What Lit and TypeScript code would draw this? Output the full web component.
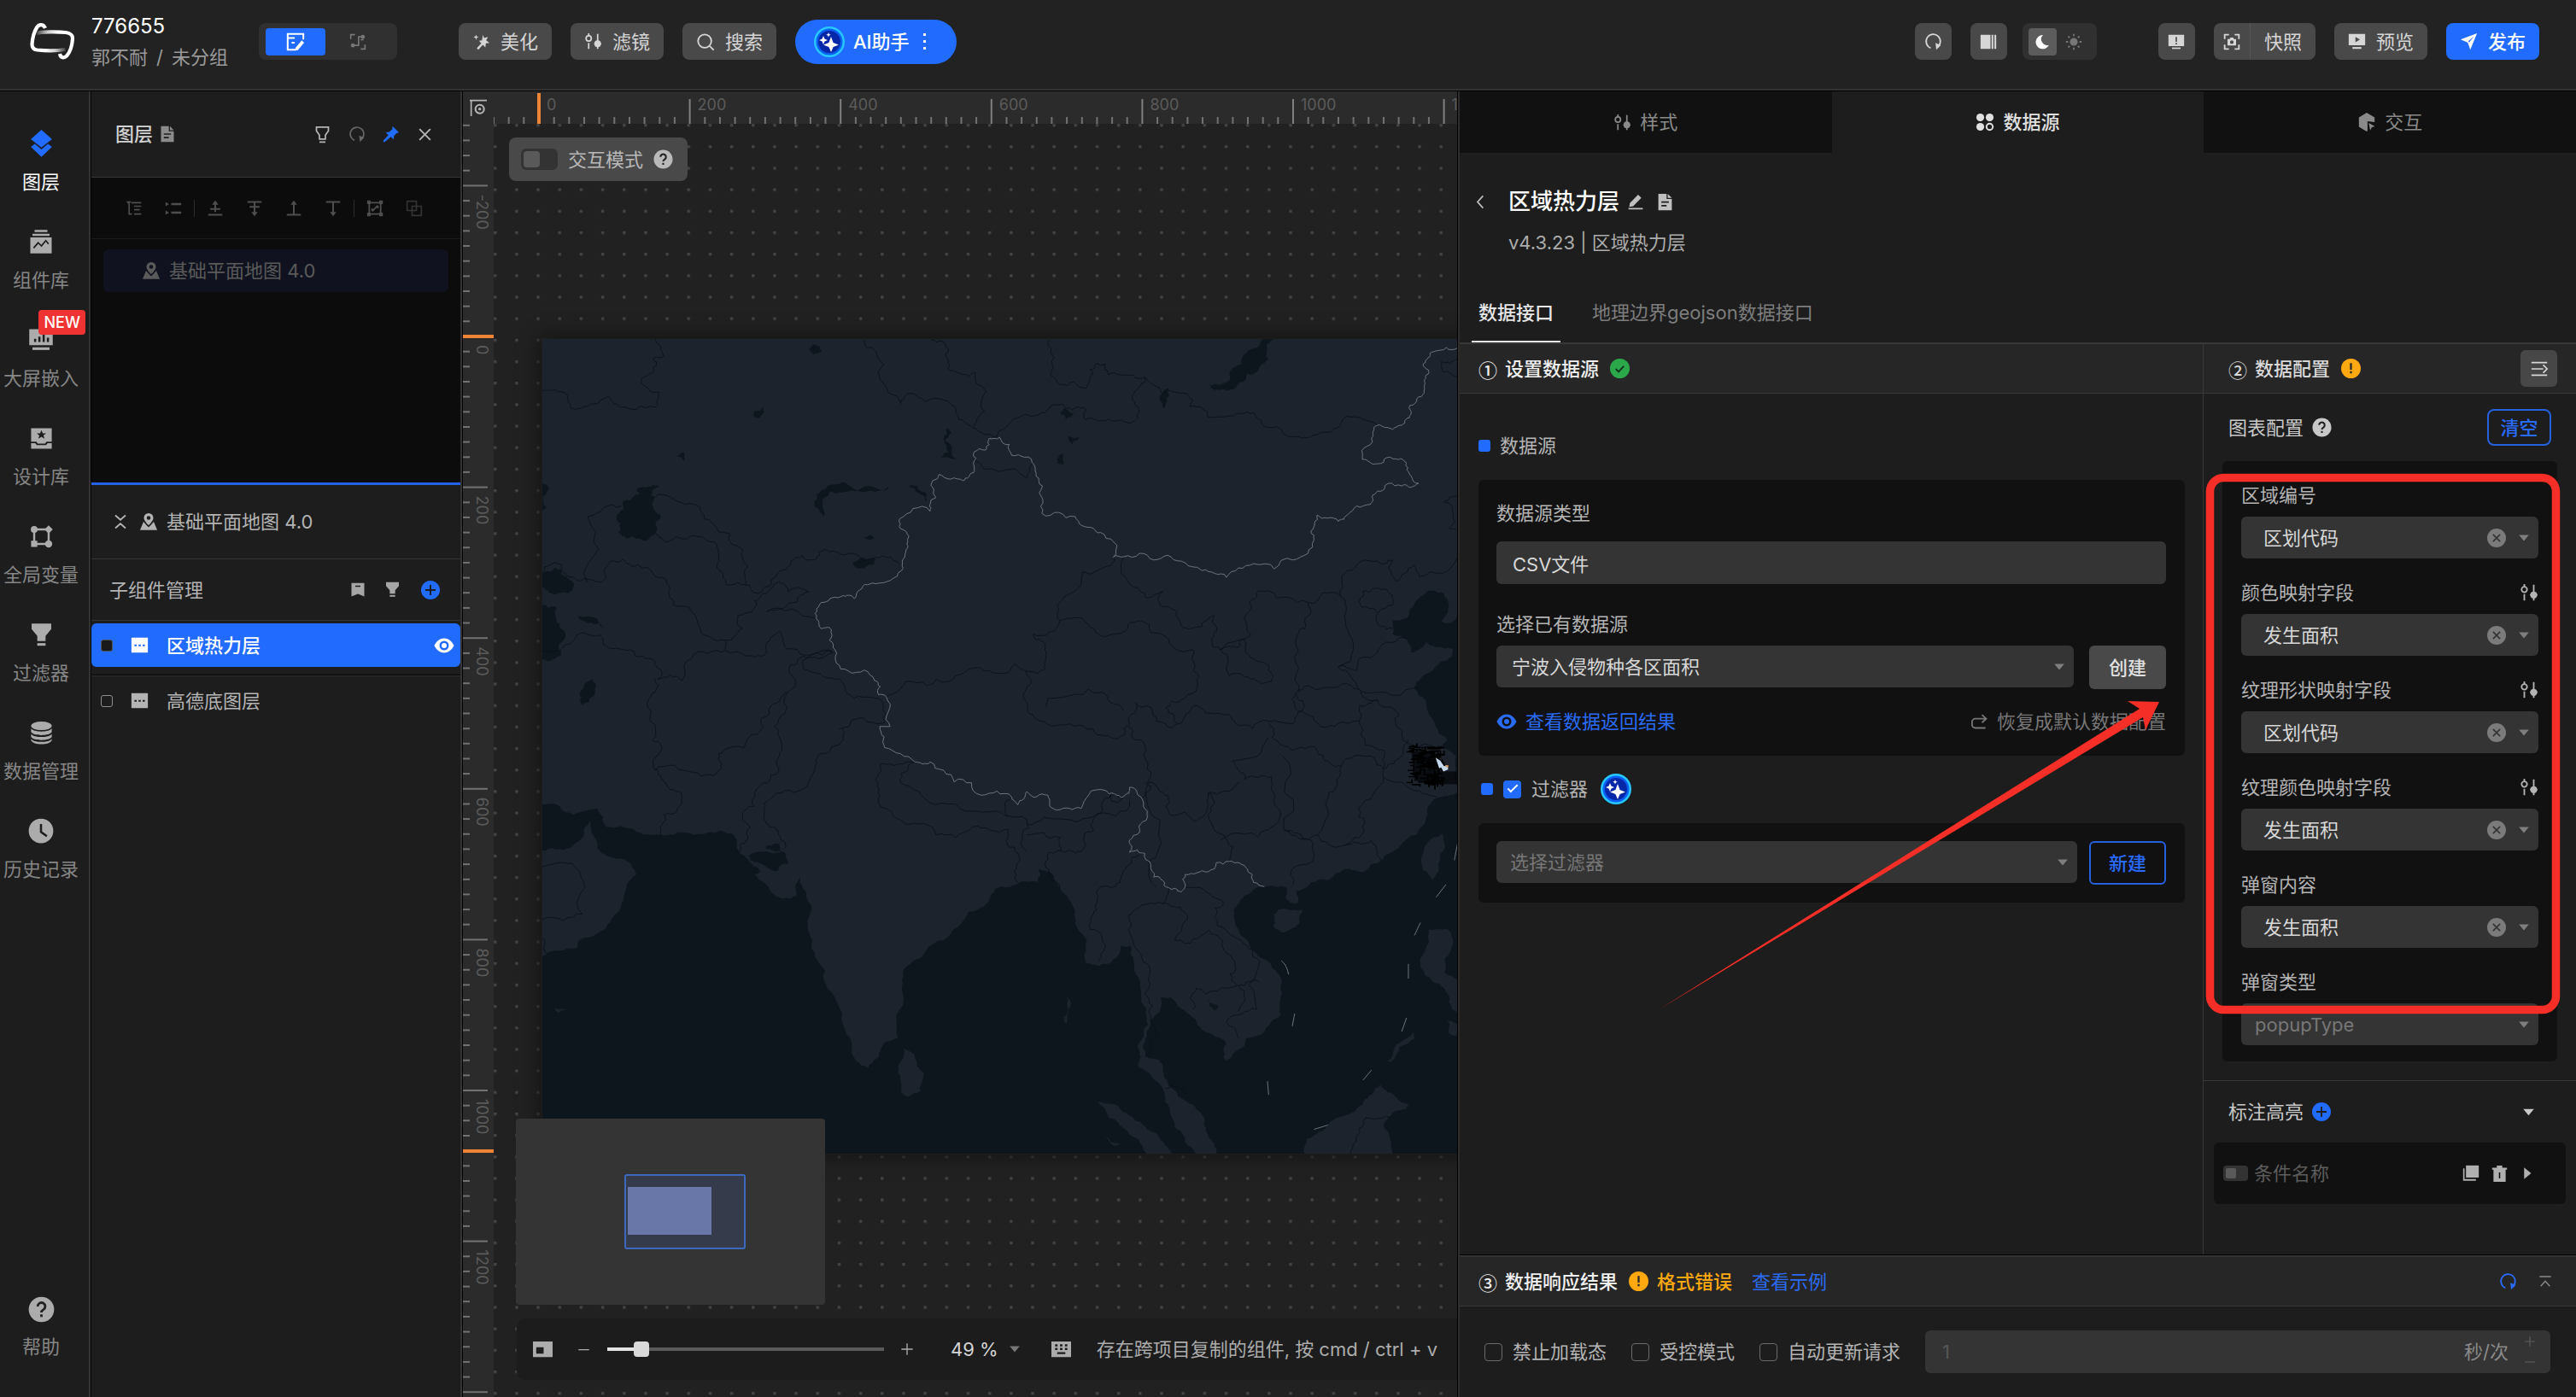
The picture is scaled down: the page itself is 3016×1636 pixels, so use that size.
import { LitElement, html, css, svg, nothing, type TemplateResult } from "lit";
import { customElement, property } from "lit/decorators.js";
import { classMap } from "lit/directives/class-map.js";

/* ---------- icons: each is drawn on a 24 x 24 grid ---------- */
const ICONS: Record<string, TemplateResult> = {
  layers: svg`<path d="M12 0 21 8 12 15 3 8Z"/><path d="M3 14.500 6.500 12 12 16.800 17.500 12 21 14.500 12 23Z"/>`,
  library: svg`<path d="M6 1h12v2H6zM4 4.500h16v2H4z"/><path fill-rule="evenodd" d="M2 8h20v15H2zM5.500 18.500l4-4.500 3 3 4-5 2 2.500 1-1-3-3.500-4.200 5-3-3-4.600 5.200z"/>`,
  embed: svg`<path fill-rule="evenodd" d="M1 2h22v15H1zM5.500 11v3h2v-3zM9.500 9v5h2V9zM13.500 7v7h2V7zM17.500 10v4h2v-4z"/><path d="M4 19h16v2.500H4z"/>`,
  design: svg`<path fill-rule="evenodd" d="M2 2h20v13h-5l-1.500 2h-7L7 15H2zM12 4l-1.300 3H7.500l2.500 2-1 3.200 3-1.900 3 1.900-1-3.200 2.500-2h-3.200z"/><path d="M2 16.500h4l1.500 2h9l1.500-2h4V22H2z"/>`,
  vars: svg`<path d="M5 5h14v14H5z" fill="none" stroke="currentColor" stroke-width="2"/><circle cx="5" cy="5" r="3.300"/><path d="m19 1 4 4-4 4-4-4zM2 16h6v6H2z"/><circle cx="19" cy="19" r="3.500"/>`,
  funnel: svg`<path d="M2.500 1h19v5.500L16 13v5H8v-5L2.500 6.500z"/><path d="M8 20h8v2.500H8z"/>`,
  funnelLine: svg`<path d="M4 2h16v5l-4 6v5H8v-5L4 7zM8 22h8" fill="none" stroke="currentColor" stroke-width="2"/>`,
  db: svg`<ellipse cx="12" cy="5" rx="10" ry="4.200"/><path d="M2 7.500c2 4 18 4 20 0V11c-2 4-18 4-20 0zM2 12.800c2 4 18 4 20 0v3c-2 4-18 4-20 0zM2 17.500c2 4 18 4 20 0V19c-2 5-18 5-20 0z"/>`,
  clock: svg`<circle cx="12" cy="12" r="11.500"/><path d="M12 5.500V13l5.500 4" fill="none" stroke="#1d1d1d" stroke-width="2"/>`,
  help: svg`<circle cx="12" cy="12" r="11.500"/><path d="M8.600 9.200a3.400 3.400 0 1 1 5.200 2.900c-1.200.7-1.800 1.200-1.800 2.600M12 16.500v2.200" fill="none" stroke="#222" stroke-width="2.200"/>`,
  doc: svg`<path fill-rule="evenodd" d="M3 1h11v7h7v15H3zM7 11v2h10v-2zM7 16v2h7v-2z"/><path d="m15.500 1 5.500 5.500h-5.500z"/>`,
  refresh: svg`<path d="M8.500 20.800A9.500 9.500 0 1 1 17 20" fill="none" stroke="currentColor" stroke-width="2"/><path d="m15 14 7 3-6 6z"/>`,
  pin: svg`<path d="m14 1 9 9-3 .5-4 4-.5 5-4-3.500L3 23l-2 0 0-2 7-7.500L4.500 9.500l5-.5 4-4z"/>`,
  close: svg`<path d="m4 4 16 16M20 4 4 20" fill="none" stroke="currentColor" stroke-width="2.400"/>`,
  tree: svg`<path d="M8 4h14M12 9h10M12 14h8M12 20h10M5 6v14h4" fill="none" stroke="currentColor" stroke-width="2"/><path d="M1 2h7L4.500 7z"/>`,
  list: svg`<path d="M9 6h14M9 18h14" fill="none" stroke="currentColor" stroke-width="3"/><path d="m1 3 5 3-5 3zM1 15l5 3-5 3z"/>`,
  up1: svg`<path d="M2 21h20M5 13h14M12 17V4" fill="none" stroke="currentColor" stroke-width="2.400"/><path d="m7.500 7 4.500-6 4.500 6z"/>`,
  down1: svg`<path d="M2 3h20M5 10h14M12 3v16" fill="none" stroke="currentColor" stroke-width="2.400"/><path d="m7.500 17 4.500 6 4.500-6z"/>`,
  top: svg`<path d="M2 21h20M12 21V4" fill="none" stroke="currentColor" stroke-width="2.400"/><path d="m7.500 7 4.500-6 4.500 6z"/>`,
  bottom: svg`<path d="M2 3h20M12 3v16" fill="none" stroke="currentColor" stroke-width="2.400"/><path d="m7.500 17 4.500 6 4.500-6z"/>`,
  group: svg`<path d="M4 4h16v16H4zM8 16l8-8M8 16v-4M16 8v4" fill="none" stroke="currentColor" stroke-width="2.200"/><path d="M1 1h5v5H1zM18 1h5v5h-5zM1 18h5v5H1zM18 18h5v5h-5z"/>`,
  ungroup: svg`<path d="M2 2h13v13H2zM9 9h13v13H9z" fill="none" stroke="currentColor" stroke-width="2" opacity="0.6"/>`,
  map: svg`<path fill-rule="evenodd" d="M12 1a6 6 0 0 1 6 6c0 4-6 9.500-6 9.500S6 11 6 7a6 6 0 0 1 6-6zm0 3.500a2.500 2.500 0 1 0 0 5 2.500 2.500 0 0 0 0-5z"/><path d="M5.500 12 9 16l3 3 3-3 3.500-4L23 22.500H1z"/>`,
  collapse: svg`<path d="m4 2 8 7 8-7M4 22l8-7 8 7" fill="none" stroke="currentColor" stroke-width="2.400"/>`,
  bookmark: svg`<path fill-rule="evenodd" d="M2 1h20v21l-10-4-10 4zM8 5v2h8V5z"/>`,
  plus: svg`<circle cx="12" cy="12" r="12"/><path d="M12 5.500v13M5.500 12h13" stroke="#1d1d1d" stroke-width="2" fill="none"/>`,
  sub: svg`<path fill-rule="evenodd" d="M1 2h22v20H1zM5 11v2.500h3V11zM10.500 11v2.500h3V11zM16 11v2.500h3V11z"/>`,
  eye: svg`<path fill-rule="evenodd" d="M12 3.500c6 0 10 5 11.500 8.500C22 15.500 18 20.500 12 20.500S2 15.500.5 12C2 8.500 6 3.500 12 3.500zm0 3a5.500 5.500 0 1 0 0 11 5.500 5.500 0 0 0 0-11z"/><circle cx="12" cy="12" r="3"/>`,
  edit: svg`<path d="M12 22H2V2h20v7M2 7h9M7 13h4" fill="none" stroke="currentColor" stroke-width="2.200"/><path d="m20 10 3 3-8 9.500-3.500.5.500-3.500z"/>`,
  flow: svg`<path d="M2 8V2h6M16 22h6v-6M18 5h-5v12H7" fill="none" stroke="currentColor" stroke-width="2"/><circle cx="19" cy="5" r="2.800"/><circle cx="5" cy="17" r="2.800"/><path d="M16 9h4" stroke="currentColor" stroke-width="2"/>`,
  magic: svg`<path d="m14 3 1.800 4.500L21 6l-2.500 4.500L23 14l-5 .5L17.500 20 14 16.500 8 23l-2-2 6-6.500L9 11l4-.5z"/><path d="m5 3 1 2.500L8.500 6 6 7 5 10 4 7 1.500 6 4 5.500z"/>`,
  filter: svg`<circle cx="6" cy="8" r="3.500" fill="none" stroke="currentColor" stroke-width="2"/><path d="M6 1v3.500M6 14v8M18 2v20" fill="none" stroke="currentColor" stroke-width="2"/><path d="m18 10 5 5-5 5-5-5z"/><circle cx="18" cy="15" r="4.500"/>`,
  search: svg`<circle cx="11" cy="11" r="8.500" fill="none" stroke="currentColor" stroke-width="2"/><path d="m17.500 17.500 5 5" stroke="currentColor" stroke-width="2"/>`,
  columns: svg`<path d="M1 2h14v20H1zM16.500 2H19v20h-2.500zM20.500 2H23v20h-2.500z"/>`,
  moon: svg`<path d="M13 1.500A10.800 10.800 0 1 0 22.500 17 9.500 9.500 0 0 1 13 1.500z"/>`,
  sun: svg`<circle cx="12" cy="12" r="5.500"/><path d="M12 1v3M12 20v3M1 12h3M20 12h3M4.200 4.200l2 2M17.800 17.800l2 2M4.200 19.800l2-2M17.800 6.200l2-2" stroke="currentColor" stroke-width="2.200"/>`,
  alert: svg`<path fill-rule="evenodd" d="M1 2h22v16H1zM11 5v7h2V5zM11 13.500v2h2v-2z"/><path d="M6 20h12v2H6z"/>`,
  shot: svg`<path d="M2 8V2h6M16 2h6v6M22 16v6h-6M8 22H2v-6" fill="none" stroke="currentColor" stroke-width="2.200"/><path fill-rule="evenodd" d="M6 8h3l1-2h4l1 2h3v9H6zm6 2a2.500 2.500 0 1 0 0 5 2.500 2.500 0 0 0 0-5z"/>`,
  preview: svg`<path fill-rule="evenodd" d="M1 2h22v15H1zM10 6v7l6-3.500z"/><path d="M6 19.500h12V22H6z"/>`,
  send: svg`<path fill-rule="evenodd" d="M23 1 14 23l-3.500-9.500L1 9.500zM19 5l-8 7 1.500 1z"/>`,
  data: svg`<circle cx="6" cy="6" r="5"/><circle cx="18" cy="6" r="5"/><circle cx="6" cy="18" r="5"/><circle cx="18" cy="18" r="4" fill="none" stroke="currentColor" stroke-width="2.200"/>`,
  cube: svg`<path d="M12 0 22 6v6l-9-1v12l-1 1L2 18V6z"/><path d="m14.500 13 8 4.500-4 1-2 4z"/>`,
  back: svg`<path d="M16 2 7 12l9 10" fill="none" stroke="currentColor" stroke-width="2.400"/>`,
  pencil: svg`<path d="M4 14 15.500 2.500l4.500 4.500L8.500 18.500 3 19.500zM2 21h20v2H2z"/>`,
  check: svg`<circle cx="12" cy="12" r="12" fill="#2ba84a"/><path d="m7 12.500 3.500 3.500L17 9" fill="none" stroke="#16321d" stroke-width="2"/>`,
  warn: svg`<circle cx="12" cy="12" r="12" fill="#ffa80f"/><path d="M12 5.500v8M12 15.500v2.500" stroke="#2a2a2a" stroke-width="2.400"/>`,
  indent: svg`<path d="M2 4h20M2 12h15M2 20h20M17 7l5 5-5 5" fill="none" stroke="currentColor" stroke-width="1.800"/>`,
  caret: svg`<path d="M2 6h20l-10 12z"/>`,
  caretRight: svg`<path d="M7 3v18l11-9z"/>`,
  clear: svg`<circle cx="12" cy="12" r="12"/><path d="m7.500 7.500 9 9M16.500 7.500l-9 9" stroke="#333" stroke-width="1.800"/>`,
  restore: svg`<path d="M20 21H6a5 5 0 0 1-5-5v-3a5 5 0 0 1 5-5h14M15 2.500 21 8l-6 5.500" fill="none" stroke="currentColor" stroke-width="2.200"/>`,
  copy: svg`<path d="M5 1h18v17H5z"/><path d="M1 5h2v15h16v2.500H1z"/>`,
  trash: svg`<path fill-rule="evenodd" d="M8 0h8v3h7v3h-2v18H3V6H1V3h7zM11 10v9h2v-9z"/>`,
  toTop: svg`<path d="M2 3h20M4 20l8-9 8 9" fill="none" stroke="currentColor" stroke-width="2.200"/>`,
  minimap: svg`<path fill-rule="evenodd" d="M0 2h24v19H0zM4 9v8h9V9z"/>`,
  keyboard: svg`<path fill-rule="evenodd" d="M0 2h24v19H0zM4.500 5.500v2.500h3V5.500zM10.500 5.500v2.500h3V5.500zM16.500 5.500v2.500h3V5.500zM4.500 10v2.500h3V10zM10.500 10v2.500h3V10zM16.500 10v2.500h3V10zM7 15v2.500h10V15z"/>`,
  minus: svg`<path d="M2 11h20v2H2z"/>`,
  add: svg`<path d="M11 2h2v9h9v2h-9v9h-2v-9H2v-2h9z"/>`,
  origin: svg`<path d="M2 24V1M0 2h24" stroke="currentColor" stroke-width="2" fill="none"/><circle cx="14" cy="14" r="6" fill="none" stroke="currentColor" stroke-width="2.500"/><circle cx="14" cy="14" r="2"/>`,
};

const ico = (name: string, size = 20) =>
  html`<svg class="ico" width=${size} height=${size} viewBox="0 0 24 24" fill="currentColor" aria-hidden="true">${ICONS[name]}</svg>`;

const aiBadge = html`<svg class="ico" width="36" height="36" viewBox="0 0 36 36" aria-hidden="true">
  <circle cx="18" cy="18" r="18" fill="#27c8ff" />
  <circle cx="18" cy="18" r="15.500" fill="#0a5ff0" />
  <circle cx="18" cy="18" r="13" fill="#0527a8" />
  <path d="m20 12 2.600 7 6.400 2.500-6.400 2.500L20 30l-2.600-6L11 21.500l6.400-2.500z" fill="#fff" />
  <path d="m11 11 1.500 3.500L16 16l-3.500 1.500L11 21l-1.500-3.500L6 16l3.500-1.500zM17 7l.8 2 2 .8-2 .8-.8 2-.8-2-2-.8 2-.8z" fill="#fff" />
</svg>`;

const base = css`
  *, *::before, *::after { box-sizing: border-box; }
  :host {
    box-sizing: border-box;
    font-family: Inter, "Noto Sans CJK SC", sans-serif;
    font-size: 22px;
    line-height: 30px;
    color: #b4b4b4;
  }
  button, input, select { font: inherit; color: inherit; margin: 0; }
  button { border: 0; padding: 0; background: none; display: inline-flex; align-items: center; justify-content: center; white-space: nowrap; }
  a { color: inherit; text-decoration: none; }
  .ico { display: block; flex: none; }
  .row { display: flex; align-items: center; }
  .grow { flex: 1; }
`;

/* ---------- map geometry ---------- */
type Pt = [number, number];
const parse = (s: string): Pt[] => s.trim().split(/\s+/).map((p) => p.split(",").map(Number) as Pt);

let seed = 7;
const rand = () => {
  seed = (seed * 16807) % 2147483647;
  return seed / 2147483647 - 0.5;
};
/** Midpoint displacement: turns a coarse outline into a ragged one. */
function ragged(s: string, amp = 0.26, closed = false): string {
  let pts = parse(s);
  if (closed) pts.push(pts[0]);
  for (let level = 0; level < 3; level++) {
    const out: Pt[] = [pts[0]];
    for (let i = 1; i < pts.length; i++) {
      const [ax, ay] = pts[i - 1];
      const [bx, by] = pts[i];
      const dx = bx - ax, dy = by - ay;
      const len = Math.hypot(dx, dy);
      const edge = (ax === bx && (ax <= 49 || ax >= 1563)) || (ay === by && (ay <= 12 || ay >= 1553));
      if (len > 5 && !edge) {
        const d = rand() * amp;
        out.push([(ax + bx) / 2 - dy * d, (ay + by) / 2 + dx * d]);
      }
      out.push([bx, by]);
    }
    pts = out;
  }
  return "M" + pts.map(([x, y]) => `${x.toFixed(1)} ${y.toFixed(1)}`).join("L") + (closed ? "Z" : "");
}

const LAND = [
  "49,12 1563,12 1563,535 1545,550 1535,545 1548,520 1540,492 1520,488 1490,515 1480,540 1455,545 1455,570 1480,580 1485,605 1510,585 1530,595 1555,598 1553,612 1520,640 1490,672 1510,695 1525,740 1545,770 1535,785 1560,800 1563,870 1530,880 1512,905 1495,950 1465,975 1435,998 1410,1018 1375,1015 1350,1035 1320,1040 1295,1055 1298,1080 1285,1078 1280,1050 1243,1048 1210,1065 1197,1085 1195,1120 1215,1150 1250,1190 1270,1235 1270,1290 1230,1330 1213,1335 1210,1350 1180,1378 1175,1370 1178,1340 1150,1325 1120,1290 1100,1275 1088,1258 1072,1258 1070,1285 1055,1300 1045,1340 1048,1370 1068,1375 1078,1410 1100,1445 1125,1460 1140,1480 1150,1520 1163,1553 1130,1553 1110,1520 1088,1480 1075,1430 1035,1390 1033,1350 1050,1310 1048,1280 1035,1220 1022,1160 1005,1160 1000,1180 970,1198 948,1193 950,1150 930,1095 905,1050 890,1022 870,1015 868,1040 830,1045 800,1050 790,1065 780,1085 755,1095 740,1120 690,1160 680,1175 650,1200 645,1250 637,1335 620,1340 605,1370 588,1391 568,1378 550,1320 520,1240 500,1180 488,1120 485,1060 475,1030 470,1065 445,1070 420,1045 400,1025 410,1020 395,1005 375,985 365,950 345,942 300,950 245,950 200,940 155,935 140,900 100,912 49,893",
  "49,980 95,975 120,935 130,920 135,955 140,975 180,995 205,1025 180,1080 162,1115 135,1140 110,1150 105,1165 49,1180",
  "645,1352 665,1370 680,1400 675,1435 655,1445 642,1435 637,1400",
  "1258,1100 1275,1088 1307,1092 1300,1118 1275,1135 1258,1122",
  "1538,948 1541,970 1530,1005 1520,1036 1505,1015 1505,985 1522,955",
  "1515,1128 1545,1128 1553,1160 1540,1210 1563,1225 1563,1290 1540,1240 1508,1215 1500,1185 1510,1165",
  "1545,1300 1563,1310 1563,1330 1548,1325",
  "1490,1318 1492,1335 1452,1380 1446,1378 1478,1335",
  "968,1455 1000,1462 1030,1490 1050,1508 1075,1530 1090,1553 1048,1553 1010,1505 985,1485",
  "1310,1553 1313,1525 1350,1495 1378,1480 1410,1450 1435,1422 1455,1440 1482,1462 1455,1475 1440,1500 1455,1553",
  "978,1520 1005,1535 995,1538",
  "68,1276 90,1280 75,1287",
  "915,1255 921,1262 915,1308 911,1295",
];
const WATER = [
  "182,322 205,305 235,310 245,345 238,375 205,390 175,378 172,345",
  "205,300 215,292 232,288 242,290 228,312 212,312",
  "500,330 503,305 520,290 560,292 622,290 618,298 560,298 528,300 512,315 514,350",
  "655,290 670,292 684,305 683,320 670,302",
  "562,436 600,428 598,438 575,446",
  "1258,12 1250,50 1215,78 1195,105 1160,108 1152,98 1185,90 1205,60 1225,30 1240,12",
  "49,455 70,445 85,460 98,488 75,492 49,482",
  "49,515 72,520 72,545 80,560 76,600 80,612 49,618",
  "49,285 58,290 56,330 49,335",
  "400,148 414,140 410,158 398,160",
  "905,150 912,142 928,152 915,164",
  "1076,110 1084,105 1082,130 1077,143",
  "490,30 500,22 512,34 496,45",
  "272,235 285,228 284,242",
  "118,665 132,655 130,690 116,705 114,690",
  "108,535 130,538 155,562 130,548",
  "720,180 725,190 715,205 735,240 708,235 722,228 712,200",
  "918,195 936,197 925,212",
  "900,238 912,228 910,250 902,248",
  "580,387 602,388 590,392",
  "390,990 430,985 452,988 455,1005 420,1012 400,1002",
  "1150,1262 1168,1275 1160,1282",
  "418,975 445,962 450,985 430,980",
];
const BORDERS = [
  "235,12 250,44 232,50 232,75 212,92 242,112 240,136 205,145 160,122 130,135 95,142 70,108 49,108",
  "580,14 600,35 642,134 655,115 715,128 735,155 760,180 800,198 870,155 908,135 945,142 948,165 990,166 1022,172 1035,145 1027,115 1045,84 1115,115 1120,140 1150,160 1215,150 1240,175 1300,197 1340,188 1380,158 1405,164 1430,175",
  "692,14 720,30 722,72 765,75 780,150 762,178",
  "888,14 892,60 905,98 948,105 955,70 980,60 985,80 1025,80 1045,84",
  "49,452 80,438 110,470 147,472 150,450 182,428 215,445 255,475 265,515 310,560 352,582 350,602 318,605 280,658 240,655 235,622 195,600 145,572 80,600 49,602",
  "124,472 124,348 180,328",
  "235,376 255,396 322,394 340,425 352,475 392,478 400,492 430,465 460,432 500,430 515,410 550,420 600,425 638,436",
  "235,312 285,325 330,360 380,410 388,440 385,478",
  "352,582 380,560 372,535 400,520 410,498 440,470 455,490 490,490 470,510 420,528 500,540",
  "352,602 380,608 420,605 440,565 460,598 528,602",
  "530,605 480,612 458,630 455,680 428,705 405,760 348,790 345,825 300,832 235,828",
  "235,655 222,700 232,770 242,775 240,800 232,822 250,850 278,870 272,905 250,912 245,950",
  "545,750 525,790 500,820 465,870 415,890 420,930 440,950 450,975",
  "440,830 400,870 380,915 388,960 372,985",
  "528,605 480,620 490,640 540,655 580,690 612,705 615,738 570,730 540,750",
  "455,680 440,730 445,790 440,830",
  "618,690 650,660 720,660 780,640 830,627 880,637 882,605 860,570 905,545 920,495 990,440 993,425",
  "848,640 850,700 865,730 920,740 960,750 1000,768 1015,742",
  "1010,424 1025,480 1045,500 1075,490 1070,515 1100,540 1115,560 1140,555 1160,535 1155,580 1170,600",
  "905,545 950,550 1000,570 1040,545 1080,575 1125,600 1135,650 1105,695 1080,710 1100,740 1065,735 1030,700 1018,745",
  "1170,600 1200,595 1220,570 1218,510 1250,488 1315,510 1310,560 1295,590 1300,680",
  "1170,600 1185,650 1220,655 1255,660 1250,630 1220,615 1210,580 1170,600",
  "1100,740 1130,705 1165,720 1195,738 1250,735 1290,740 1305,715 1295,682 1340,672 1400,675 1430,695",
  "1315,510 1370,500 1380,450 1430,432 1455,430 1460,470 1490,440 1500,462 1563,425",
  "1370,500 1380,560 1365,632 1395,640 1430,605 1480,580",
  "1405,490 1440,485 1455,515 1430,530 1405,520 1405,490",
  "1430,532 1435,555 1455,560",
  "1365,632 1400,675 1440,680 1490,672",
  "1295,682 1310,720 1360,745 1395,735 1400,705 1430,695 1465,720 1470,760 1535,785",
  "1250,738 1255,765 1290,790 1340,800 1370,820 1400,800 1440,825 1470,800 1480,770",
  "1400,735 1410,780 1440,790 1438,825",
  "1250,765 1190,810 1210,845 1255,840 1265,900 1250,940 1170,960",
  "1018,745 1045,780 1050,850 1040,880",
  "1050,850 1075,870 1085,910 1130,925 1150,870 1200,850",
  "1150,870 1155,905 1175,950 1185,1000",
  "1272,800 1275,940 1330,950 1350,870 1370,820",
  "1275,940 1320,960 1325,990 1290,1045",
  "1330,950 1375,970 1400,955 1398,900 1440,840 1438,825",
  "1375,970 1420,960 1435,998",
  "1440,840 1480,860 1530,880",
  "600,845 610,815 665,812 640,845 680,880 760,905 820,915 825,880",
  "600,845 605,880 650,930 700,950 760,935 820,940 818,970 835,985 835,1040",
  "820,915 850,920 850,980",
  "850,930 910,920 980,880 1010,878",
  "850,950 905,955 905,980 885,985 880,1005 905,1050",
  "905,980 930,985 945,955 960,920 1020,885",
  "1045,985 1015,1010 1005,1040 965,1060 960,1100 975,1150 968,1190",
  "1085,1050 1075,1080 1025,1095 1018,1130 1040,1180 1045,1250 1055,1300 1045,1370",
  "1075,1080 1110,1095 1095,1150 1150,1130 1175,1150 1195,1190 1198,1235 1130,1240 1125,1280",
  "1112,1050 1150,1060 1175,1080 1160,1105 1205,1150 1235,1190 1230,1280 1180,1305 1200,1335",
  "1235,1230 1200,1235 1200,1285",
  "49,1010 110,1018 115,1100 49,1110",
  "1385,1553 1400,1505 1410,1485 1455,1483",
  "1080,1430 1115,1440",
  "1010,878 1000,890 985,868",
  "1045,850 1052,900 1050,1000 1065,1050",
  "49,1145 60,1175",
  "1563,50 1535,55 1538,75 1563,85",
  "1563,310 1540,320 1548,370 1560,372",
  "762,240 850,275 860,245",
  "880,710 885,692 975,680 1010,715",
];
const NATION =
  "1563,28 1525,35 1512,50 1505,62 1515,75 1508,98 1495,125 1485,155 1470,175 1455,183 1430,175 1420,200 1405,240 1430,248 1465,240 1480,255 1498,285 1470,290 1430,300 1418,325 1380,345 1365,357 1330,345 1320,375 1325,392 1290,430 1225,437 1180,463 1140,450 1105,432 1060,430 1010,424 993,425 972,378 960,370 930,348 875,342 876,290 862,250 825,232 805,198 788,200 782,222 762,228 762,265 745,280 705,268 690,325 690,338 640,352 655,385 650,415 643,450 600,475 570,490 565,503 545,498 515,510 502,540 510,560 527,562 533,600 555,640 598,658 605,685 618,690 624,745 607,745 615,785 665,812 690,812 730,850 775,875 825,878 835,893 850,868 885,875 900,903 940,900 980,866 1010,878 1020,860 1042,885 1042,925 1020,960 1020,983 1045,985 1060,1030 1085,1050 1105,1058 1112,1025 1150,1020 1185,1000 1215,1015 1225,1040 1243,1048";
const SEA_DASHES = "M1563 962L1557 998M1543 1044L1527 1068M1501 1116L1491 1140M1481 1194V1222M1271 1188Q1280 1196 1283 1214M1293 1288L1289 1312M1478 1296L1470 1322M1420 1395L1406 1414M1248 1416L1250 1442M1348 1499L1325 1507";

/** The cluttered block of district outlines near the coast. */
const CLUTTER = Array.from({ length: 110 }, () => {
  const x = 1478 + (rand() + 0.5) * 48;
  const y = 783 + (rand() + 0.5) * 74;
  return `M${x.toFixed(0)} ${y.toFixed(0)}h${(6 + (rand() + 0.5) * 12).toFixed(0)}v${(rand() * 22).toFixed(0)}`;
}).join("");

@customElement("base-map")
class BaseMap extends LitElement {
  static styles = css`
    :host { display: block; background: #0d161d; height: 100%; }
    .map { display: block; }
  `;
  render() {
    return html`<svg class="map" width="1072" height="954" viewBox="49 12 1514 1541" preserveAspectRatio="none" role="img" aria-label="地图">
      <g fill="#1c232d">${LAND.map((l) => svg`<path d=${ragged(l, 0.3, true)} />`)}</g>
      <g fill="#0d161d">${WATER.map((l) => svg`<path d=${ragged(l, 0.5, true)} />`)}</g>
      <g fill="none" stroke="#0b1017" stroke-width="1.300">${BORDERS.map((l) => svg`<path d=${ragged(l, 0.5)} />`)}</g>
      <path d=${ragged(NATION, 0.5)} fill="none" stroke="#747a81" stroke-width="1.400" />
      <path d=${SEA_DASHES} fill="none" stroke="#7b8288" stroke-width="1.300" />
      <path d="M1486 792h38v14h10v24h29v24h-36l-36-6z" fill="#020304" opacity="0.7" />
      <path d=${CLUTTER} fill="none" stroke="#000" stroke-width="2.500" />
      <path d="M1526 804l8 6 6 10-8 4zM1535 822l10-4 2 8-8 4z" fill="#c5d9ee" />
      <path d="M1540 820l7-2v5z" fill="#e09a5a" />
    </svg>`;
  }
}

@customElement("top-bar")
class TopBar extends LitElement {
  static styles = [base, css`
    :host { display: flex; align-items: center; height: 106px; padding: 0 43px 7px 35px; background: #222; border-bottom: 2px solid #333; color: #d6d6d6; }
    .logo { margin-right: 20px; flex: none; }
    .title { font-size: 24px; line-height: 37px; color: #fff; }
    .crumb { line-height: 37px; color: #9a9a9a; display: flex; gap: 10px; white-space: nowrap; }
    .seg { display: flex; align-items: center; height: 43px; background: #303030; border-radius: 8px; padding: 0 8px; margin-left: 36px; }
    .seg button { width: 70px; height: 32px; border-radius: 4px; color: #777; }
    .seg .off { width: 76px; }
    .seg .on { background: #216bff; color: #fff; }
    .tools { display: flex; gap: 22px; margin-left: 72px; align-items: center; }
    .btn { height: 43px; border-radius: 8px; background: #494949; padding: 0 16px; gap: 12px; }
    .sq { width: 43px; padding: 0; }
    .ai { height: 52px; border-radius: 26px; background: #216bff; color: #fff; padding: 0 30px 0 22px; gap: 10px; font-weight: 500; }
    .dots { display: grid; gap: 5px; padding: 0 6px; }
    .dots i { width: 3px; height: 3px; background: #fff; }
    .theme { margin-left: -4px; padding: 0 7px; }
    .theme button { width: 33px; }
    .theme .on { background: #5c5c5c; }
    .theme .off { width: 40px; }
    .right { display: flex; gap: 22px; align-items: center; }
    .split { padding: 0; gap: 0; }
    .split i { display: flex; align-items: center; justify-content: center; width: 43px; height: 43px; border-right: 1px solid #555; }
    .split span { width: 76px; }
    .go { background: #216bff; color: #fff; font-weight: 500; }
    .gap { width: 28px; }
  `];
  render() {
    return html`
      <svg class="logo" width="52" height="44" viewBox="-1 -1 52 44" aria-hidden="true">
        <defs>
          <linearGradient id="a" x1="0" x2="1"><stop offset="0" stop-color="#444" /><stop offset="0.300" stop-color="#ccc" /><stop offset="0.600" stop-color="#fff" /></linearGradient>
          <linearGradient id="b" x1="1" x2="0"><stop offset="0" stop-color="#444" /><stop offset="0.300" stop-color="#ccc" /><stop offset="0.600" stop-color="#fff" /></linearGradient>
        </defs>
        <path d="M7 11C12 9 32 9 41 10c6 1 8 3 8 7-.5 9-3 16-7 20.500-3 3-7 2.500-8-2.500" fill="none" stroke="url(#a)" stroke-width="4.200" />
        <path d="M17 5C15 0 10 0 7.500 3.500 4 9 2 16 1.500 24c0 4 2 6 6 6.500 10 1 24 1 33-.5" fill="none" stroke="url(#b)" stroke-width="4.200" />
      </svg>
      <div>
        <div class="title">776655</div>
        <div class="crumb"><span>郭不耐</span><span>/</span><span>未分组</span></div>
      </div>
      <div class="seg">
        <button class="on" aria-label="编辑">${ico("edit", 22)}</button>
        <button class="off" aria-label="蓝图">${ico("flow", 20)}</button>
      </div>
      <div class="tools">
        <button class="btn">${ico("magic", 21)}美化</button>
        <button class="btn">${ico("filter", 21)}滤镜</button>
        <button class="btn">${ico("search", 22)}搜索</button>
        <button class="ai">${aiBadge}AI助手<span class="dots"><i></i><i></i><i></i></span></button>
      </div>
      <div class="grow"></div>
      <div class="right">
        <button class="btn sq" aria-label="刷新">${ico("refresh", 21)}</button>
        <button class="btn sq" aria-label="布局">${ico("columns", 20)}</button>
        <div class="seg theme">
          <button class="on" aria-label="深色">${ico("moon", 18)}</button>
          <button class="off" aria-label="浅色">${ico("sun", 20)}</button>
        </div>
        <span class="gap"></span>
        <button class="btn sq" aria-label="提示">${ico("alert", 20)}</button>
        <button class="btn split"><i>${ico("shot", 20)}</i><span>快照</span></button>
        <button class="btn">${ico("preview", 21)}预览</button>
        <button class="btn go">${ico("send", 21)}发布</button>
      </div>`;
  }
}

@customElement("side-nav")
class SideNav extends LitElement {
  static styles = [base, css`
    :host { display: flex; flex-direction: column; background: #1d1d1d; border-right: 2px solid #333; padding: 41px 8px 44px 0; }
    nav { display: flex; flex-direction: column; gap: 35px; flex: 1; }
    a { display: grid; grid-template-rows: 40px 30px; gap: 10px; justify-items: center; align-items: center; color: #868686; white-space: nowrap; position: relative; }
    .ico { color: #acacac; }
    .on { color: #fff; }
    .on .ico { color: #216bff; }
    .help { grid-template-rows: 30px 30px; gap: 14px; }
    .new { position: absolute; top: -15px; right: -4px; height: 29px; padding: 0 6px; border-radius: 4px; background: #ef3333; color: #fff; font-size: 18px; line-height: 29px; font-weight: 500; }
  `];
  private items: [string, string, number][] = [
    ["layers", "图层", 33], ["library", "组件库", 30], ["embed", "大屏嵌入", 30], ["design", "设计库", 29],
    ["vars", "全局变量", 29], ["funnel", "过滤器", 29], ["db", "数据管理", 29], ["clock", "历史记录", 30],
  ];
  render() {
    return html`<nav>${this.items.map(([i, t, s], n) => html`
        <a href="#" class=${classMap({ on: n === 0 })}>${ico(i, s)}<span>${t}</span>${n === 2 ? html`<span class="new">NEW</span>` : nothing}</a>`)}
      </nav>
      <a href="#" class="help">${ico("help", 31)}<span>帮助</span></a>`;
  }
}

@customElement("layer-panel")
class LayerPanel extends LitElement {
  static styles = [base, css`
    :host { display: flex; flex-direction: column; background: #1d1d1d; border-right: 2px solid #333; }
    .head { height: 101px; padding: 0 32px 0 28px; border-bottom: 1px solid #383838; gap: 20px; }
    .name { display: flex; align-items: center; gap: 7px; color: #d2d2d2; font-weight: 500; }
    .name .ico { color: #8b8b8b; }
    .dim { color: #666; }
    .blue { color: #216bff; }
    .dark { background: #0c0c0c; height: 360px; border-bottom: 3px solid #2463e8; }
    .tools { height: 72px; padding: 0 0 0 40px; border-bottom: 1px solid #1c1c1c; gap: 26px; color: #4e4e4e; }
    .tools i { width: 1px; height: 20px; background: #2c2c2c; margin: 0 -12px; }
    .item { margin: 12px 14px; height: 50px; border-radius: 6px; background: #10131f; color: #5a5a5a; padding-left: 45px; gap: 10px; }
    .sub { height: 87px; padding-left: 25px; border-bottom: 1px solid #333; gap: 10px; }
    .sub .first { margin-right: 3px; }
    .mgr { height: 72px; padding: 0 24px 0 21px; border-bottom: 1px solid #333; gap: 22px; }
    .mgr button { color: #a6a6a6; }
    .mgr .blue { color: #216bff; margin-left: 2px; }
    .list { padding-top: 3px; }
    .layer { height: 51px; padding: 0 7px 0 11px; border-radius: 6px; }
    .layer .t { margin-left: 21px; }
    .layer input { appearance: none; width: 14px; height: 14px; border: 1px solid #8f8f8f; border-radius: 3px; margin-right: 21px; }
    .layer.on { background: #216bff; color: #fff; font-weight: 500; }
    .layer.on input { background: #1a1a1a; border-color: #555; }
    .rule { height: 2px; margin: 9px 0 3px; border-top: 1px solid #000; background: #333; }
  `];
  render() {
    return html`
      <div class="row head">
        <span class="name">图层${ico("doc", 20)}</span><span class="grow"></span>
        <button aria-label="筛选">${ico("funnelLine", 21)}</button>
        <button class="dim" aria-label="刷新">${ico("refresh", 20)}</button>
        <button class="blue" aria-label="固定">${ico("pin", 20)}</button>
        <button aria-label="关闭">${ico("close", 19)}</button>
      </div>
      <div class="dark">
        <div class="row tools">
          ${["tree", "list", "|", "up1", "down1", "top", "bottom", "|", "group", "ungroup"].map((n) =>
            n === "|" ? html`<i></i>` : html`<button aria-label=${n}>${ico(n, 20)}</button>`)}
        </div>
        <div class="row item">${ico("map", 22)}<span>基础平面地图 4.0</span></div>
      </div>
      <div class="row sub"><button class="first" aria-label="收起">${ico("collapse", 18)}</button>${ico("map", 22)}<span>基础平面地图 4.0</span></div>
      <div class="row mgr"><span>子组件管理</span><span class="grow"></span>
        <button aria-label="收藏">${ico("bookmark", 18)}</button>
        <button aria-label="过滤">${ico("funnel", 19)}</button>
        <button class="blue" aria-label="添加">${ico("plus", 22)}</button>
      </div>
      <div class="list">
        <label class="row layer on"><input type="checkbox" />${ico("sub", 21)}<span class="t grow">区域热力层</span>${ico("eye", 24)}</label>
        <div class="rule"></div>
        <label class="row layer"><input type="checkbox" />${ico("sub", 21)}<span class="t grow">高德底图层</span></label>
      </div>`;
  }
}

const UNIT = 17.66; /* screen pixels per 20 canvas units */

@customElement("canvas-stage")
class CanvasStage extends LitElement {
  static styles = [base, css`
    :host { display: grid; grid-template: 38px minmax(0, 1fr) / 36px minmax(0, 1fr); background: #212121; overflow: hidden; position: relative; }
    .corner { background: #2b2b2b; color: #b5b5b5; display: grid; place-items: center; }
    .ruler { background: #2b2b2b; overflow: hidden; position: relative; }
    .ruler svg { position: absolute; inset: 0; }
    .ruler text { font-family: Inter, sans-serif; font-size: 18px; fill: #5b5b5b; }
    .stage { position: relative; overflow: hidden; }
    .grid { position: absolute; inset: 0; }
    .board { position: absolute; left: 57px; top: 252px; width: 1694px; height: 954px; box-shadow: 0 0 20px 4px #151515, 0 0 0 1px #2b2b2b; }
    .mode { position: absolute; left: 18px; top: 16px; height: 51px; display: flex; align-items: center; border-radius: 8px; background: #494949; padding: 0 17px 0 14px; gap: 12px; color: #b9b9b9; }
    .switch { appearance: none; width: 43px; height: 25px; border-radius: 6px; background: #333; padding: 3px; }
    .switch::before { content: ""; display: block; width: 19px; height: 19px; border-radius: 4px; background: #595959; }
    .mini { position: absolute; left: 26px; bottom: 108px; width: 362px; height: 218px; background: #343434; border-radius: 4px; padding: 65px 0 0 127px; }
    .view { width: 142px; height: 88px; border: 2px solid #3c68bd; border-radius: 3px; background: #353b4b; padding: 13px 2px; }
    .area { width: 98px; height: 56px; background: #6976a8; }
    .bar { position: absolute; left: 27px; right: 0; bottom: 20px; height: 72px; background: #1c1c1c; border-radius: 10px 0 0 10px; display: flex; align-items: center; padding-left: 19px; white-space: nowrap; overflow: hidden; color: #acacac; }
    .bar .minus { margin: 0 20px 0 29px; }
    .bar .plus { margin: 0 43px 0 19px; }
    .bar .pct { color: #d4d4d4; gap: 12px; }
    .bar .keys { margin: 0 30px 0 36px; }
    .bar .caret { color: #777; }
    input[type="range"] { appearance: none; width: 324px; height: 20px; background: none; }
    input[type="range"]::-webkit-slider-runnable-track { height: 4px; background: linear-gradient(90deg, #e4e4e4 12%, #5a5a5a 12%); }
    input[type="range"]::-webkit-slider-thumb { appearance: none; width: 18px; height: 18px; margin-top: -7px; border-radius: 4px; background: #d9d9d9; }
  `];
  private hRuler() {
    const out = [];
    for (let i = -3; i < 70; i++) {
      const x = 53 + i * UNIT;
      const big = i % 10 === 0;
      out.push(svg`<path d=${`M${x.toFixed(1)} ${big ? (i === 0 ? 2 : 9) : 30}V38`} stroke=${i === 0 ? "#f08435" : big ? "#808080" : "#727272"} stroke-width=${i === 0 ? 4 : 2} />`);
      if (big) out.push(svg`<text x=${(x + 9).toFixed(1)} y="22">${i * 20}</text>`);
    }
    return out;
  }
  private vRuler() {
    const out = [];
    for (let i = -14; i < 71; i++) {
      const y = 249 + i * UNIT;
      const big = i % 10 === 0;
      if (i === 0) out.push(svg`<path d=${`M0 ${y}H36`} stroke="#f08435" stroke-width="4" />`);
      else out.push(svg`<path d=${`M0 ${y.toFixed(1)}H${big ? 29 : 8}`} stroke="#727272" stroke-width="2" />`);
      if (big && i < 70) out.push(svg`<text transform=${`translate(16 ${(y + 10).toFixed(1)}) rotate(90)`}>${i * 20}</text>`);
    }
    out.push(svg`<path d="M0 1203H36" stroke="#f08435" stroke-width="4" />`);
    return out;
  }
  render() {
    return html`
      <div class="corner">${ico("origin", 20)}</div>
      <div class="ruler"><svg width="100%" height="100%">${this.hRuler()}</svg></div>
      <div class="ruler"><svg width="100%" height="100%">${this.vRuler()}</svg></div>
      <div class="stage">
        <svg class="grid" width="100%" height="100%">
          <defs><pattern id="dots" width="25.170" height="25.170" patternUnits="userSpaceOnUse"><rect width="3.500" height="3.500" rx="1" fill="#444" /></pattern></defs>
          <rect width="100%" height="100%" fill="url(#dots)" />
        </svg>
        <div class="board"><base-map></base-map></div>
        <label class="mode"><input class="switch" type="checkbox" role="switch" /><span>交互模式</span>${ico("help", 23)}</label>
        <div class="mini"><div class="view"><div class="area"></div></div></div>
        <div class="bar">
          <button aria-label="缩略图">${ico("minimap", 23)}</button>
          <button class="minus" aria-label="缩小">${ico("minus", 15)}</button>
          <input type="range" min="0" max="100" value="10" aria-label="缩放" />
          <button class="plus" aria-label="放大">${ico("add", 16)}</button>
          <button class="pct">49 %<span class="caret">${ico("caret", 14)}</span></button>
          <button class="keys" aria-label="快捷键">${ico("keyboard", 23)}</button>
          <span>存在跨项目复制的组件, 按 cmd / ctrl + v</span>
        </div>
      </div>`;
  }
}

@customElement("drop-down")
class DropDown extends LitElement {
  @property() value = "";
  @property() label = "";
  @property({ type: Boolean }) clearable = false;
  @property({ type: Boolean }) muted = false;
  static styles = [base, css`
    :host { display: block; position: relative; }
    select { appearance: none; display: block; width: 100%; height: 49px; border: 0; border-radius: 6px; background: #343434; color: #d8d8d8; padding: 0 50px 0 18px; }
    .muted { color: #777; padding-left: 16px; }
    .clearable { padding-left: 26px; }
    .end { position: absolute; right: 10px; top: 0; height: 49px; gap: 14px; color: #7e7e7e; pointer-events: none; }
    .end button { color: #7b7b7b; }
  `];
  render() {
    return html`<select aria-label=${this.label} class=${classMap({ muted: this.muted, clearable: this.clearable })}><option>${this.value}</option></select>
      <span class="row end">${this.clearable ? html`<button aria-label="清除">${ico("clear", 22)}</button>` : nothing}${ico("caret", 14)}</span>`;
  }
}

@customElement("data-panel")
class DataPanel extends LitElement {
  static styles = [base, css`
    :host { display: flex; flex-direction: column; background: #1d1d1d; border-left: 2px solid #2e2e2e; position: relative; min-width: 0; }
    .tabs { display: grid; grid-template-columns: repeat(3, 1fr); height: 72px; }
    .tabs button { background: #111; color: #8a8a8a; gap: 10px; }
    .tabs .on { background: none; color: #e0e0e0; font-weight: 500; }
    .title { height: 48px; margin-top: 33px; padding-left: 16px; color: #fff; font-size: 26px; font-weight: 500; }
    .title .name { margin: 0 9px 0 24px; }
    .title button { color: #c0c0c0; }
    .title .doc { margin-left: 14px; }
    .ver { line-height: 48px; padding-left: 57px; color: #acacac; }
    .ifs { display: flex; height: 73px; margin-top: 22px; padding-left: 14px; gap: 30px; border-bottom: 2px solid #383838; }
    .ifs button { color: #7d7d7d; padding: 0 7px; }
    .ifs .on { color: #e6e6e6; border-bottom: 2px solid #e6e6e6; padding: 2px 8px 0; font-weight: 500; }
    .cols { flex: 1; display: grid; grid-template-columns: minmax(0, 1fr) 437px; }
    .cfg { border-left: 1px solid #383838; }
    .bar { height: 58px; background: #262626; border-bottom: 1px solid #383838; padding: 0 22px; color: #f0f0f0; font-weight: 500; }
    .num { font-family: "Noto Sans CJK SC", sans-serif; margin-right: 9px; }
    .bar .ico { margin-left: 13px; }
    .cfg .bar { padding-left: 29px; color: #d8d8d8; }
    .cfg .bar button { width: 43px; height: 43px; border-radius: 6px; background: #474747; }
    .cfg .bar button .ico { margin: 0; }
    .body { padding: 41px 21px 0 22px; }
    .sec { height: 40px; margin-bottom: 20px; gap: 11px; }
    .sq { width: 14px; height: 14px; border-radius: 3px; background: #216bff; }
    .card { background: #111; border-radius: 6px; padding: 24px 22px 25px 21px; }
    .card label { display: block; }
    .text { display: block; width: 100%; height: 50px; margin: 18px 0 32px; border: 0; border-radius: 6px; background: #343434; color: #d8d8d8; padding: 0 19px; }
    .pick { display: flex; gap: 18px; height: 51px; }
    .pick drop-down { flex: 1; }
    .pick button { width: 90px; height: 51px; border-radius: 6px; background: #494949; color: #e0e0e0; font-weight: 500; }
    .pick .line { background: none; border: 2px solid #2561dc; color: #2a6bff; }
    .first { margin-top: 10px; }
    .links { margin-top: 23px; justify-content: space-between; }
    .links a { display: flex; align-items: center; gap: 10px; color: #777; }
    .links .blue { color: #2a6bf5; }
    .flt { height: 36px; margin: 21px 0 22px; padding-left: 3px; gap: 12px; }
    .flt label { display: flex; align-items: center; gap: 12px; margin-right: 3px; }
    .box { appearance: none; width: 21px; height: 21px; border: 1px solid #6a6a6a; border-radius: 4px; display: grid; place-items: center; }
    .flt .box { background: #216bff; border: 0; }
    .flt .box::before { content: ""; width: 12px; height: 6px; border-left: 2px solid #fff; border-bottom: 2px solid #fff; transform: translateY(-2px) rotate(-45deg); }
    .second { padding: 21px 22px 21px 21px; }
    .second .pick { gap: 14px; }
    .ctitle { height: 79px; padding: 0 29px 0 29px; gap: 10px; color: #c8c8c8; }
    .ctitle button { width: 75px; height: 43px; border: 2px solid #2561dc; border-radius: 8px; color: #2a6bff; font-weight: 500; }
    .fields { margin: 0 22px; padding: 0 22px 19px; background: #111; border-radius: 6px; }
    .fl { height: 65px; padding-top: 15px; justify-content: space-between; }
    .mark { height: 73px; margin-top: 22px; border-top: 1px solid #383838; padding: 0 48px 0 29px; gap: 10px; color: #c8c8c8; }
    .mark button { color: #216bff; }
    .cond { height: 72px; margin: 0 12px; background: #111; border-radius: 6px; padding: 0 36px 0 11px; gap: 8px; color: #5c5c5c; }
    .cond label { display: flex; align-items: center; gap: 7px; }
    .cond button { color: #b0b0b0; margin-left: 6px; }
    .sw { appearance: none; width: 29px; height: 18px; border-radius: 4px; background: #333; padding: 3px; }
    .sw::before { content: ""; display: block; width: 12px; height: 12px; border-radius: 2px; background: #5a5a5a; }
    .res { height: 60px; border-top: 2px solid #333; box-shadow: 0 -1px #000; padding-right: 28px; gap: 0; }
    .res .warn { color: #ffa80f; margin: 0 23px 0 10px; }
    .res a { color: #2a6bf5; font-weight: 400; }
    .res button { color: #8a8a8a; margin-left: 12px; }
    .res .blue { color: #2a6bff; }
    .opts { height: 106px; padding: 0 30px 0 29px; }
    .opts label { display: flex; align-items: center; gap: 12px; margin-right: 29px; white-space: nowrap; }
    .num-in { flex: 1; min-width: 0; height: 50px; border-radius: 6px; background: #343434; padding: 0 17px 0 20px; gap: 18px; color: #8a8a8a; }
    .num-in input { flex: 1; min-width: 0; border: 0; padding: 0; background: none; color: #565656; }
    .step { display: grid; gap: 10px; color: #5e5e5e; }
    .note { position: absolute; left: 0; top: 0; pointer-events: none; }
  `];
  private fields: [string, string, boolean][] = [
    ["区域编号", "区划代码", false], ["颜色映射字段", "发生面积", true], ["纹理形状映射字段", "区划代码", true],
    ["纹理颜色映射字段", "发生面积", true], ["弹窗内容", "发生面积", false], ["弹窗类型", "", false],
  ];
  render() {
    return html`
      <div class="tabs">
        <button>${ico("filter", 21)}样式</button>
        <button class="on">${ico("data", 22)}数据源</button>
        <button>${ico("cube", 22)}交互</button>
      </div>
      <div class="row title"><button aria-label="返回">${ico("back", 17)}</button><span class="name">区域热力层</span>
        <button aria-label="重命名">${ico("pencil", 20)}</button><button class="doc" aria-label="文档">${ico("doc", 21)}</button></div>
      <div class="ver">v4.3.23 | 区域热力层</div>
      <div class="ifs"><button class="on">数据接口</button><button>地理边界geojson数据接口</button></div>
      <div class="cols">
        <section>
          <div class="row bar"><span class="num">①</span>设置数据源${ico("check", 23)}</div>
          <div class="body">
            <div class="row sec"><i class="sq"></i>数据源</div>
            <div class="card">
              <label for="kind">数据源类型</label>
              <input class="text" id="kind" type="text" value="CSV文件" />
              <span>选择已有数据源</span>
              <div class="pick first"><drop-down value="宁波入侵物种各区面积" label="选择已有数据源"></drop-down><button>创建</button></div>
              <div class="row links">
                <a class="blue" href="#">${ico("eye", 24)}查看数据返回结果</a>
                <a href="#">${ico("restore", 20)}恢复成默认数据配置</a>
              </div>
            </div>
            <div class="row flt"><i class="sq"></i><label><input class="box" type="checkbox" checked />过滤器</label>${aiBadge}</div>
            <div class="card second">
              <div class="pick"><drop-down muted value="选择过滤器" label="选择过滤器"></drop-down><button class="line">新建</button></div>
            </div>
          </div>
        </section>
        <section class="cfg">
          <div class="row bar"><span class="num">②</span>数据配置${ico("warn", 23)}<span class="grow"></span><button aria-label="展开">${ico("indent", 22)}</button></div>
          <div class="row ctitle">图表配置${ico("help", 23)}<span class="grow"></span><button>清空</button></div>
          <div class="fields">
            ${this.fields.map(([l, v, f]) => html`
              <div class="row fl"><span>${l}</span>${f ? ico("filter", 22) : nothing}</div>
              <drop-down label=${l} value=${v || "popupType"} ?clearable=${!!v} ?muted=${!v}></drop-down>`)}
          </div>
          <div class="row mark">标注高亮<button aria-label="添加">${ico("plus", 22)}</button><span class="grow"></span>${ico("caret", 15)}</div>
          <div class="row cond"><label><input class="sw" type="checkbox" role="switch" />条件名称</label><span class="grow"></span>
            <button aria-label="复制">${ico("copy", 20)}</button><button aria-label="删除">${ico("trash", 19)}</button><button aria-label="展开">${ico("caretRight", 18)}</button></div>
        </section>
      </div>
      <div class="row bar res"><span class="num">③</span>数据响应结果${ico("warn", 23)}<span class="warn">格式错误</span><a href="#">查看示例</a>
        <span class="grow"></span><button class="blue" aria-label="刷新">${ico("refresh", 21)}</button><button aria-label="收起">${ico("toTop", 16)}</button></div>
      <div class="row opts">
        <label><input class="box" type="checkbox" />禁止加载态</label>
        <label><input class="box" type="checkbox" />受控模式</label>
        <label><input class="box" type="checkbox" />自动更新请求</label>
        <div class="row num-in"><input type="text" value="1" aria-label="更新间隔" /><span>秒/次</span><span class="step">${ico("add", 14)}${ico("minus", 14)}</span></div>
      </div>
      <svg class="note" width="1307" height="1100" viewBox="0 0 1307 1100" aria-hidden="true">
        <path d="M232 1076 796 723 782 714 819 715 803 748 800 733Z" fill="#f52f27" />
        <rect x="878.500" y="452.500" width="405" height="623" rx="16" fill="none" stroke="#f52f27" stroke-width="9.500" />
      </svg>`;
  }
}

@customElement("app-root")
class AppRoot extends LitElement {
  static styles = css`
    :host { display: grid; grid-template-rows: auto minmax(0, 1fr); gap: 1px; min-height: 100vh; background: #000; }
    .main { display: grid; grid-template-columns: 106px 434px minmax(0, 1fr) 1309px; gap: 1px; }
  `;
  render() {
    return html`<top-bar></top-bar>
      <div class="main"><side-nav></side-nav><layer-panel></layer-panel><canvas-stage></canvas-stage><data-panel></data-panel></div>`;
  }
}
